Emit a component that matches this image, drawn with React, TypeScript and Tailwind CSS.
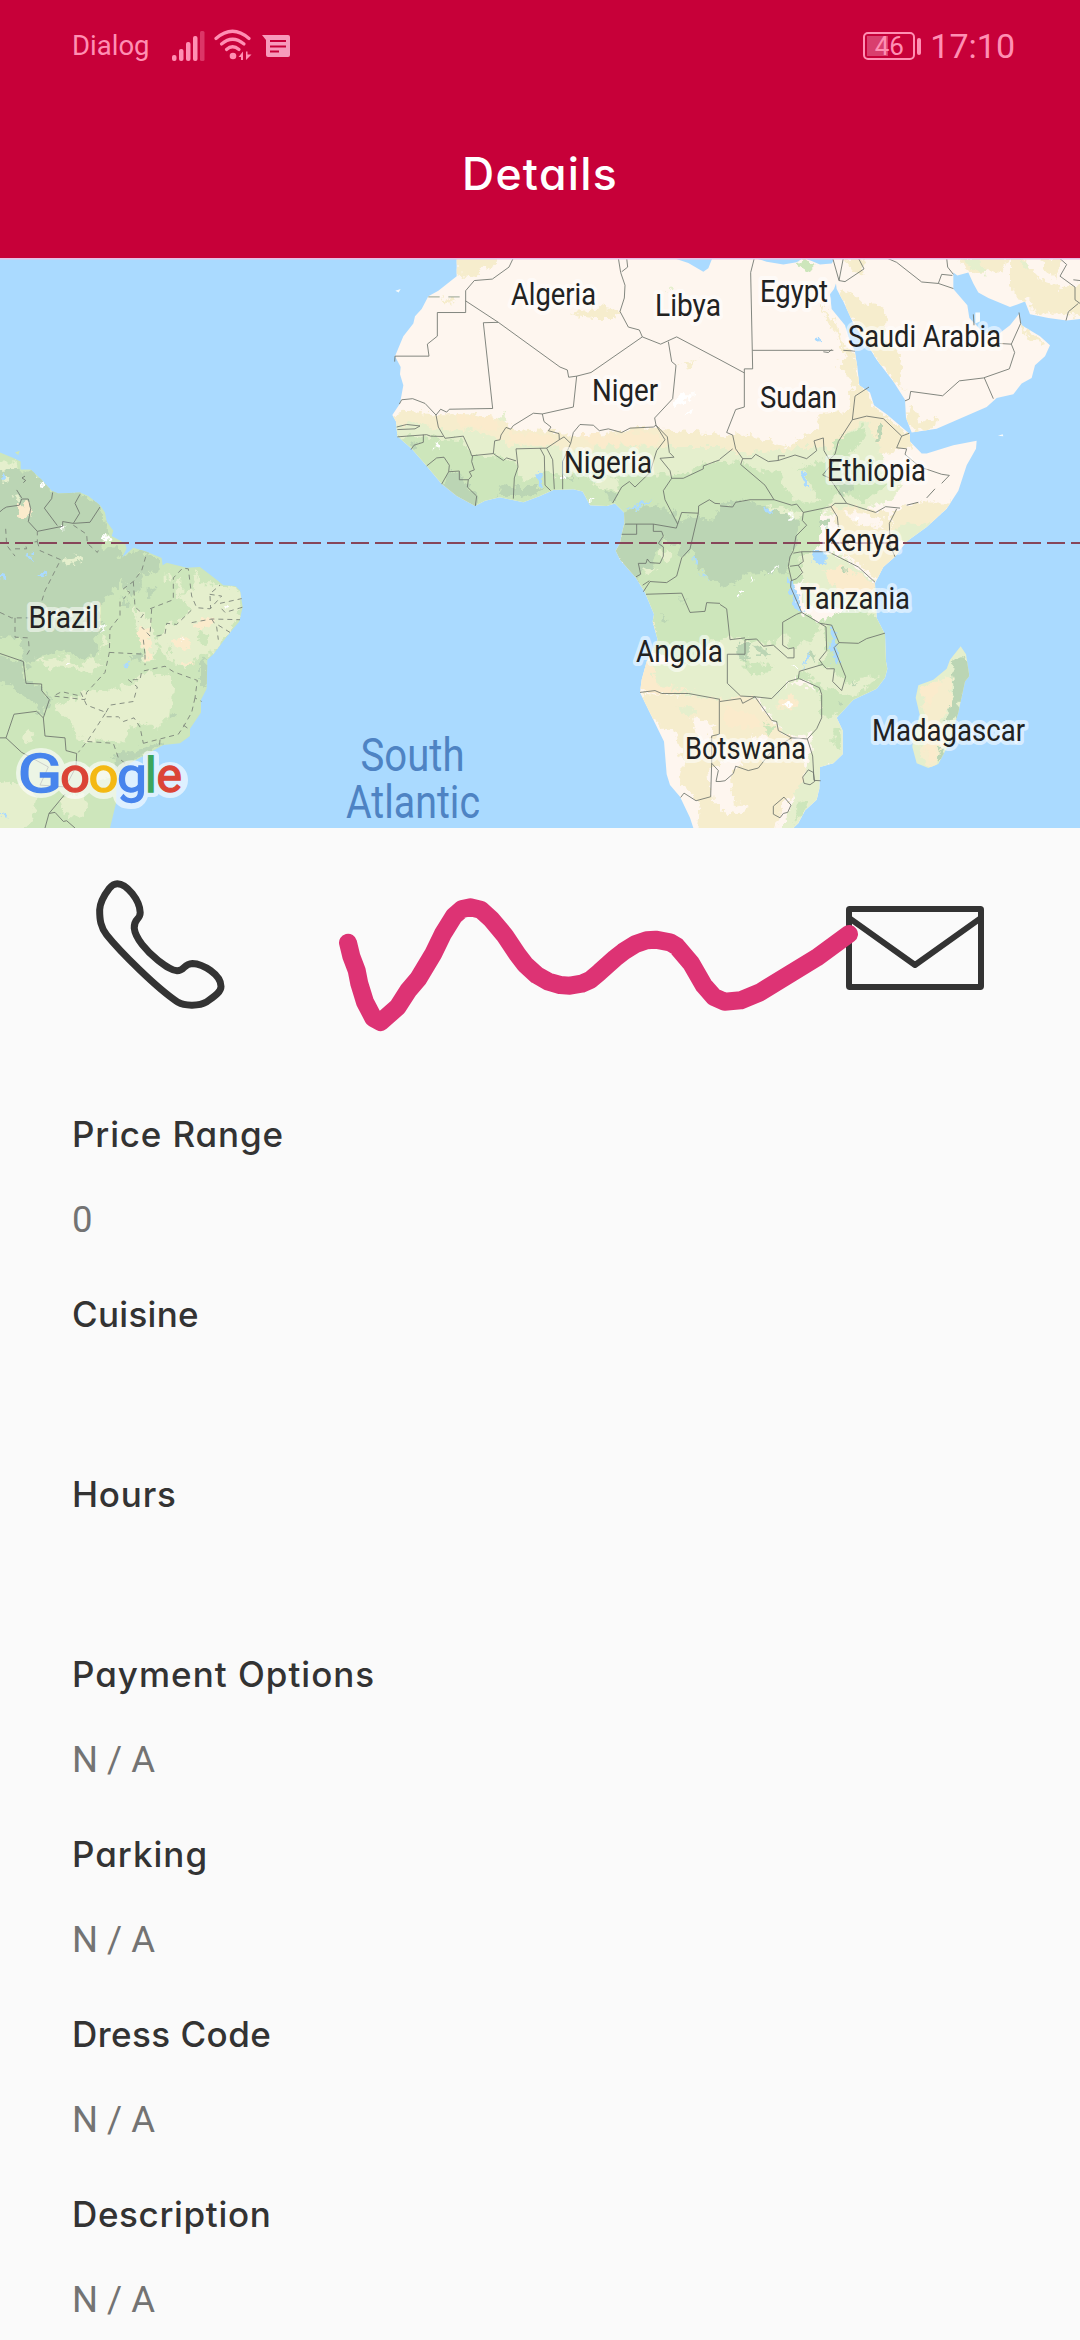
import React from "react";

type Patch = { fill: string; d: string };

const DESERT = "#fef6ef";
const SAND = "#f6edcd";
const PEACH = "#fbebcc";
const LIME = "#e5efcd";
const GREEN = "#cde6bb";
const FOREST = "#bbd5b4";
const WATER = "#aadaff";

const AMERICA_LAND =
  "M0,535 L40,550 62,560 62,582 92,582 125,610 155,640 175,648 240,645 265,655 300,680 315,700 320,725 340,750 335,765 375,785 380,800 365,825 400,797 440,808 485,825 488,845 500,838 560,852 600,850 650,885 670,900 705,902 720,915 728,960 718,1000 690,1030 665,1060 640,1090 622,1105 620,1185 603,1215 603,1250 570,1295 570,1315 540,1335 490,1340 440,1365 390,1390 350,1440 348,1500 330,1568 0,1568Z";

const WEST_AFRICA_LAND =
  "M290,0 L290,50 235,90 205,105 185,140 165,160 160,180 130,215 105,270 122,300 120,320 130,350 120,400 97,432 108,450 112,490 155,525 200,572 245,622 290,655 345,682 375,668 420,658 490,672 540,655 580,638 640,636 668,642 690,680 740,682 765,675 792,700 793,730 785,760 780,785 767,805 780,830 828,880 855,920 882,980 878,1000 893,1050 880,1075 860,1110 845,1160 840,1195 880,1270 912,1330 920,1420 930,1450 960,1482 990,1540 1000,1568 1080,1568 1080,0 1057,0 1045,28 1030,38 985,14 940,0Z";

const EAST_AFRICA_LAND =
  "M0,0 L102,0 140,10 190,18 230,12 250,0 275,8 300,18 335,15 345,0 352,60 342,85 330,100 335,140 375,185 385,215 405,258 412,300 418,350 450,370 462,405 500,430 545,465 570,485 570,505 605,538 620,538 700,515 770,503 768,525 740,570 715,640 680,690 620,740 560,780 525,822 490,850 465,895 470,990 495,1035 498,1110 502,1130 495,1155 470,1185 400,1215 350,1265 368,1300 368,1365 340,1390 300,1400 298,1460 290,1490 255,1520 235,1555 220,1568 0,1568Z";

const ARABIA_LAND =
  "M338,0 L1080,0 1080,168 1040,172 985,165 930,155 915,120 870,135 805,110 775,95 760,70 745,40 712,48 700,40 700,85 742,130 748,165 790,205 835,210 870,185 896,155 905,185 960,215 990,240 975,270 945,295 935,330 905,345 880,375 830,385 800,410 700,450 650,470 575,480 558,440 555,390 520,340 470,280 440,235 400,180 370,120 350,85Z";

const MADAGASCAR_LAND =
  "M722,1068 L738,1090 748,1150 735,1165 715,1250 685,1340 655,1392 625,1403 590,1390 577,1345 580,1310 600,1260 587,1210 595,1175 640,1160 680,1130 690,1105Z";

const AMERICA: Patch[] = [
  { fill: FOREST, d: "M-30,575 L62,582 92,582 155,642 240,645 300,680 318,720 322,750 305,800 355,795 360,820 420,805 480,835 470,862 420,870 430,900 400,935 360,880 350,905 320,930 300,965 305,1020 285,1050 290,1085 250,1108 200,1085 170,1080 110,1100 80,1125 60,1080 -30,1060Z" },
  { fill: GREEN, d: "M-30,1040 L60,1050 75,1100 -30,1088Z" },
  { fill: FOREST, d: "M-30,1088 L70,1110 78,1170 125,1175 148,1215 130,1265 100,1225 60,1200 45,1175 -30,1165Z" },
  { fill: LIME, d: "M-30,560 L45,560 50,580 -30,585Z M10,600 h18 v15 h-18z M180,832 L250,820 248,835 200,845Z M38,645 L60,660 60,678 42,665Z" },
  { fill: PEACH, d: "M50,680 L88,670 90,715 100,718 55,712Z" },
  { fill: LIME, d: "M170,1238 L240,1205 280,1185 330,1190 400,1165 430,1140 500,1145 520,1180 510,1255 470,1300 430,1275 400,1290 370,1330 240,1325 205,1270Z" },
  { fill: LIME, d: "M105,1100 L140,1105 200,1098 240,1125 280,1100 310,1120 270,1140 200,1128 140,1125Z M310,1040 L330,1060 300,1080Z" },
  { fill: LIME, d: "M540,930 L600,900 680,900 722,915 725,960 700,1010 650,1080 600,1090 560,1130 500,1100 470,1060 500,1010 560,985Z" },
  { fill: LIME, d: "M500,860 L520,900 500,890Z M530,880 h14 v50 h-14z M590,860 L605,900 590,930 575,920Z M400,955 L440,990 470,1040 460,1110 430,1110 430,1050 410,1020Z" },
  { fill: GREEN, d: "M540,950 L560,945 570,975 545,970Z M600,1020 L630,1040 620,1070 590,1050Z M500,1060 L515,1070 510,1095Z" },
  { fill: PEACH, d: "M415,1010 L440,1020 450,1070 460,1100 440,1110 430,1060 412,1040Z M575,1010 L640,985 650,1000 600,1020Z M515,1050 L560,1040 570,1080 530,1070Z M550,1110 h30 v12 h-30z" },
  { fill: FOREST, d: "M600,1105 L622,1105 622,1180 600,1170Z M340,1370 L440,1345 490,1330 480,1345 400,1385 350,1420Z M440,860 L460,850 455,870Z M360,940 h25 v20 h-25z M440,905 L470,915 440,935Z M515,1245 L530,1258 512,1270Z M390,1095 h40 v12 h-40z" },
  { fill: LIME, d: "M-30,1450 L60,1440 110,1480 100,1540 60,1598 -30,1598Z M180,1490 L240,1470 270,1500 240,1540 190,1530Z M80,1300 L100,1315 80,1335 65,1320Z M250,1400 L330,1410 340,1430 260,1440Z" },
  { fill: WATER, d: "M70,818 L95,812 100,828Z M0,870 L28,875 0,882Z M110,875 L150,860 130,875Z M370,1120 L385,1112 380,1130Z M0,605 L12,590 15,612Z M0,1530 L25,1525 20,1540Z" },
  { fill: "#ffffff", d: "M120,612 L145,630 125,625Z M315,760 L335,775 318,780Z M185,735 L198,740 188,748Z M300,1015 L312,1018 302,1028Z M195,1110 h14 v8 h-14z M540,1045 L555,1050 548,1062Z M675,950 l10,10 -6,12z" },
];

const WEST_AFRICA: Patch[] = [
  { fill: SAND, d: "M290,-30 L450,-30 400,20 330,50 290,45Z M630,150 L680,145 720,135 780,145 770,165 700,165 650,160Z M250,110 L285,120 260,128Z M960,290 L1000,285 1020,265 990,300Z" },
  { fill: SAND, d: "M60,432 L150,420 240,430 340,430 400,440 470,470 600,480 640,490 700,485 880,465 930,475 1110,485 1110,560 900,540 640,540 400,530 250,500 60,470Z" },
  { fill: LIME, d: "M60,470 L180,450 230,470 330,475 400,495 450,515 560,515 640,530 760,515 900,520 1110,520 1110,640 60,640Z" },
  { fill: PEACH, d: "M290,430 L400,440 420,470 300,465Z M660,490 L700,485 870,480 905,500 870,515 700,515Z M450,480 L560,490 600,500 560,510 450,505Z" },
  { fill: GREEN, d: "M60,490 L180,490 250,500 310,500 335,545 400,545 470,560 480,590 560,590 590,600 640,590 770,600 860,590 930,600 1060,562 1110,562 1110,1050 1040,1080 1000,1125 900,1090 870,1080 860,950 740,780 680,700 345,720 150,600Z" },
  { fill: LIME, d: "M470,530 L540,530 540,600 490,610 470,580Z M560,530 L610,530 610,570 580,590Z M690,610 L760,600 780,640 710,630Z M620,560 L680,555 690,590 640,585Z M370,500 L440,520 430,540 350,535Z" },
  { fill: FOREST, d: "M230,630 L270,590 300,585 310,612 350,655 345,700 290,675Z M430,625 L470,630 530,630 560,635 490,655 410,655Z M150,510 L190,505 160,525Z M610,600 L650,600 640,615Z M730,640 L770,650 760,675Z" },
  { fill: FOREST, d: "M790,700 L860,680 940,695 955,730 1010,705 1050,705 1110,685 1110,905 1050,880 1010,850 1000,800 960,830 940,800 890,850 850,850 830,890 750,805 785,760Z" },
  { fill: GREEN, d: "M1015,680 L1050,665 1075,690 1060,720 1020,715Z M910,770 L960,800 940,850 900,880 870,870Z" },
  { fill: LIME, d: "M900,800 L940,810 920,840 905,830Z M840,855 L890,850 870,870Z" },
  { fill: FOREST, d: "M900,970 L920,1000 905,1005Z M955,940 L990,935 970,945Z" },
  { fill: LIME, d: "M850,1110 L960,1120 1020,1100 1040,1060 1110,1050 1110,1215 900,1198 825,1160Z" },
  { fill: PEACH, d: "M850,1110 L880,1130 890,1175 1000,1190 900,1198 830,1190Z M870,985 L890,1040 870,1000Z" },
  { fill: SAND, d: "M820,1197 L1110,1212 1110,1598 1000,1598 1020,1500 960,1440 970,1380 940,1300 890,1280Z" },
  { fill: DESERT, d: "M1000,1265 L1050,1275 1060,1300 1040,1340 1010,1320Z M1045,1400 L1110,1400 1110,1520 1060,1500Z" },
  { fill: LIME, d: "M950,1235 L990,1228 1010,1250 975,1258Z M930,80 L945,85 925,100Z M410,445 L440,420 430,455Z" },
  { fill: "#ffffff", d: "M935,405 L955,375 1005,375 980,395 940,408Z M970,430 L1000,415 990,432Z M220,510 L240,505 238,525 225,520Z M690,662 h15 v8 h-15z M600,600 h12 v8 h-12z" },
  { fill: WATER, d: "M525,590 L548,588 545,630 535,625Z M800,692 L880,658 875,670 810,695Z M1000,825 L1015,830 1005,845Z M1010,862 L1055,882 1030,875Z" },
];

const EAST_AFRICA: Patch[] = [
  { fill: GREEN, d: "M225,15 L260,5 285,15 262,38Z" },
  { fill: SAND, d: "M300,120 L350,180 370,240 400,260 415,340 450,370 460,410 570,485 575,520 480,540 300,540 -30,560 -30,485 100,490 200,520 290,470 300,430 390,420 400,350 350,290 380,270 340,200Z" },
  { fill: LIME, d: "M-30,520 L90,540 230,520 340,520 390,470 440,450 480,520 490,600 560,620 520,670 420,690 340,700 200,700 -30,640Z" },
  { fill: GREEN, d: "M-30,562 L60,560 140,590 240,580 330,550 350,500 430,460 440,490 380,550 460,600 500,620 440,670 350,640 330,680 300,700 300,790 240,890 200,900 -30,930Z" },
  { fill: LIME, d: "M180,570 L250,590 280,640 300,670 230,670 190,630Z M140,680 L250,700 230,730 150,700Z" },
  { fill: FOREST, d: "M-30,690 L60,665 150,690 235,720 225,790 200,860 80,870 20,910 -30,900Z M340,620 L410,600 400,640 360,650Z M300,720 h30 v20 h-30z" },
  { fill: SAND, d: "M330,680 L440,690 510,700 510,760 545,822 500,850 475,895 430,850 360,810 350,730Z M520,690 L620,670 700,670 630,750 560,790 510,750Z" },
  { fill: DESERT, d: "M370,695 L440,705 490,720 480,745 400,730Z M540,620 L640,600 680,640 600,670 520,670Z" },
  { fill: LIME, d: "M510,750 L560,730 640,735 560,790Z M240,810 L360,815 460,890 480,990 360,960 250,960Z" },
  { fill: PEACH, d: "M310,860 L370,850 420,870 470,900 430,930 350,920Z M250,900 h50 v20 h-50z" },
  { fill: GREEN, d: "M-30,905 L20,910 110,880 205,890 240,970 300,1000 400,960 490,990 515,1035 522,1130 480,1200 350,1275 300,1260 300,1190 240,1160 190,1110 100,1110 -30,1060Z" },
  { fill: LIME, d: "M-30,1050 L60,1045 160,1065 230,1000 310,1010 320,1090 290,1120 340,1130 375,1165 480,1150 400,1210 310,1180 240,1150 150,1210 20,1215 -30,1215Z" },
  { fill: GREEN, d: "M60,1110 L160,1120 130,1150 90,1140Z M240,1130 L290,1160 240,1160Z M190,1000 L220,990 300,1010 280,1050 210,1070Z" },
  { fill: FOREST, d: "M50,1060 L90,1055 80,1120 55,1100Z M270,1090 L290,1080 280,1110Z M355,1220 L372,1222 365,1238Z M100,1070 L160,1085 130,1100Z" },
  { fill: SAND, d: "M-30,1215 L100,1205 155,1275 210,1320 250,1330 255,1460 190,1500 160,1598 -30,1598Z" },
  { fill: LIME, d: "M120,1215 L220,1170 300,1190 305,1270 260,1320 200,1310 160,1270Z M280,1270 L350,1255 388,1300 385,1380 310,1410 308,1470 250,1540 220,1598 160,1598 200,1540 250,1430 270,1370Z" },
  { fill: PEACH, d: "M170,1210 L230,1205 230,1235 180,1240Z M10,1240 L110,1250 120,1290 20,1290Z" },
  { fill: GREEN, d: "M340,1290 L362,1300 362,1350 340,1340Z M240,1490 L270,1490 220,1560Z M130,1280 L160,1290 150,1310Z" },
  { fill: DESERT, d: "M-30,1400 L30,1375 80,1370 30,1430 40,1500 90,1510 60,1530 -30,1520Z M90,1320 L150,1310 130,1350Z" },
  { fill: FOREST, d: "M440,560 L460,555 450,620 430,610Z M465,470 L490,450 485,500 470,500Z M370,850 h10 v12 h-10z M390,1160 L410,1165 395,1180Z" },
  { fill: WATER, d: "M240,588 L255,600 270,640 250,620Z M120,692 L150,688 170,696 140,700Z M278,810 L320,805 320,840 300,848 278,830Z M204,870 L215,880 245,970 232,975 210,920Z M332,1010 L345,1030 358,1110 345,1120 332,1070Z M240,1130 L275,1080 265,1110Z M165,1200 L195,1185 170,1198Z M293,215 L307,228 294,230Z" },
  { fill: "#ffffff", d: "M85,885 L95,870 90,900Z M150,860 L175,852 165,862Z M205,700 h10 v20 h-10z M60,915 h12 v10 h-12z M400,715 L415,720 408,735Z M215,1120 h12 v8 h-12z M190,1225 h18 v8 h-18z" },
];

const ARABIA: Patch[] = [
  { fill: SAND, d: "M350,85 L400,100 430,125 480,130 500,150 490,220 530,250 550,300 540,350 570,370 520,340 440,235 400,180Z M380,0 L430,0 430,50 400,40Z" },
  { fill: SAND, d: "M720,0 L860,0 850,40 800,30 770,50 740,30Z M870,-30 L920,10 960,60 1020,80 1110,70 1110,165 1000,150 950,155 930,120 890,110 870,70Z M895,180 L975,235 930,230Z M570,400 L600,450 650,440 640,470 580,480 560,440Z M960,0 L1020,0 1010,60 980,40Z" },
  { fill: LIME, d: "M730,0 L790,0 780,20 800,45 760,30Z M900,10 L930,15 925,30Z" },
];

const AMERICA_BORDERS =
  "M0,698 L10,690 20,685 58,680 65,663 85,663 92,690 85,725 112,752 188,738 188,725 220,730 270,727 300,685 M50,638 L65,660 M158,645 L155,662 133,688 172,736 M240,650 L225,675 239,702 220,730 M75,600 L66,605 77,612 70,618 M0,1088 L70,1110 78,1170 125,1172 125,1190 148,1215 130,1265 110,1247 42,1255 18,1320 0,1320 M18,1320 L65,1360 145,1400 120,1450 195,1455 M130,1265 L135,1315 195,1320 198,1355 230,1363 228,1400 205,1440 M195,1475 L147,1528 135,1568 M147,1528 L165,1525 190,1550 200,1548 225,1568";

const AMERICA_STATES =
  "M17,745 L20,790 45,820 M45,800 L80,800 75,785 112,780 112,752 M112,780 L120,805 182,830 135,915 125,945 M0,975 L35,990 85,990 M45,990 L45,1043 85,1045 88,1080 75,1100 M220,735 L260,760 262,785 292,810 300,795 M437,822 L425,860 400,890 370,910 390,920 370,938 M400,890 L405,960 430,980 415,1000 M360,945 L360,985 330,1020 328,1085 315,1140 260,1195 255,1215 160,1205 185,1193 242,1205 M328,1085 L435,1090 435,1120 M450,965 L520,940 520,880 548,853 565,855 575,930 590,962 630,965 665,930 628,925 660,900 M455,965 L450,1040 425,1015 M430,1050 L435,1090 M470,1040 L495,1035 500,1005 530,1008 575,968 M575,1003 L635,993 720,995 M635,993 L650,1015 655,1050 M655,1010 L690,1030 M665,965 L675,975 730,960 M660,950 L725,937 M630,930 L632,965 M242,1195 L260,1230 318,1250 265,1325 235,1360 M318,1250 L330,1230 400,1220 412,1180 385,1160 420,1160 425,1137 495,1123 520,1138 592,1162 585,1210 605,1220 M585,1210 L575,1250 550,1290 535,1310 430,1335 M320,1262 L355,1262 370,1275 402,1265 420,1290 430,1335 M262,1330 L340,1335 355,1375 395,1405 M480,1325 L478,1345 M550,1285 L570,1298";

const WEST_BORDERS =
  "M460,0 L447,25 397,58 343,62 317,90 317,150 232,150 232,215 202,237 207,270 105,270 104,285 M317,118 L415,177 600,300 622,308 626,328 650,325 693,315 847,217 838,198 805,190 780,147 793,110 795,75 782,40 775,0 M800,0 L803,25 785,38 M415,177 L370,178 398,414 268,416 260,424 242,416 228,432 195,400 158,387 125,390 118,402 M650,325 L640,410 547,429 520,427 460,461 452,471 438,466 423,487 420,500 404,503 400,538 335,544 330,530 310,490 255,496 235,465 228,432 M110,465 L140,458 180,462 165,470 112,472 M112,492 L200,486 212,490 250,491 M190,486 L190,507 162,515 153,527 M200,572 L230,550 252,548 268,570 266,588 245,622 M266,588 L298,586 298,610 325,610 335,600 328,588 343,583 335,560 338,544 M325,610 L322,630 350,655 346,682 M400,538 L430,557 440,550 468,558 M547,429 L552,450 573,465 565,475 597,483 598,500 560,523 468,525 474,575 463,605 460,662 M540,523 L553,545 555,625 572,640 M560,523 L578,555 583,636 M598,500 L612,492 632,510 608,560 608,636 M632,510 L640,480 660,458 700,460 718,475 745,470 785,480 810,468 880,465 888,460 M888,460 L884,440 938,387 948,295 935,285 925,230 M847,217 L902,237 950,217 1080,280 M888,460 L915,500 890,530 870,590 825,630 808,615 785,630 758,674 M888,460 L922,492 928,535 942,548 900,551 930,585 935,606 970,606 1030,580 1030,572 1080,555 M935,606 L910,640 915,665 953,732 949,743 880,732 795,732 M953,732 L965,700 1015,702 1016,682 1048,665 1065,675 1080,676 M1015,702 L990,800 965,825 950,875 920,893 870,890 850,918 M785,760 L830,760 830,732 M880,732 L880,752 905,752 910,765 895,785 910,795 910,820 900,840 870,838 862,828 858,840 835,840 842,870 828,877 M848,900 L868,888 M858,925 L965,922 990,975 1035,972 1040,948 1080,950 M840,1195 L885,1190 905,1198 985,1198 1080,1214 M1078,1215 L1078,1310 1055,1315 1055,1390 1052,1482 1008,1493 972,1472 962,1484 M1055,1390 L1075,1410 1068,1440 1080,1440";

const EAST_BORDERS =
  "M103,0 L92,40 98,305 73,305 73,410 47,417 20,480 38,487 47,525 68,552 95,552 107,540 145,560 175,557 225,542 260,552 290,530 282,503 310,495 312,530 328,555 345,540 355,505 397,445 405,380 447,355 M98,254 L340,254 M370,254 L405,256 M0,280 L73,316 M175,557 L175,544 195,544 M310,258 L325,260 335,252 M0,553 L38,525 M68,552 L62,568 135,625 162,665 215,680 230,677 250,700 333,684 345,675 380,675 328,605 308,597 345,555 M0,682 L38,685 47,672 90,665 162,665 M250,700 L247,722 260,735 228,765 220,805 210,822 205,848 215,888 M380,675 L467,700 497,684 540,688 M397,445 L440,435 490,442 545,490 568,482 M545,490 L530,522 560,525 555,540 600,575 665,595 688,598 665,620 M333,684 L352,712 355,740 M530,690 L508,730 510,790 525,822 M220,812 L245,808 325,808 415,850 465,892 M245,808 L250,835 235,845 210,848 M235,845 L248,865 230,882 213,888 212,905 245,975 230,980 188,1002 188,1065 205,1075 222,1072 222,1100 203,1100 160,1065 130,1068 110,1048 75,1050 75,1090 22,1090 22,1170 62,1205 105,1207 M155,1212 L105,1207 M155,1212 L205,1165 235,1157 238,1137 308,1118 298,1105 320,1080 318,1015 300,1005 245,975 M0,953 L20,965 30,1050 75,1045 M300,1005 L335,1010 357,1058 415,1060 440,1047 495,1032 M357,1058 L342,1072 377,1152 365,1190 338,1165 343,1130 320,1130 308,1118 M238,1157 L298,1182 305,1200 305,1265 290,1295 262,1323 215,1320 175,1300 170,1275 155,1272 105,1207 M0,1220 L62,1212 68,1225 105,1207 M262,1323 L278,1370 282,1437 302,1438 M0,1440 L15,1438 40,1418 47,1398 85,1410 115,1403 160,1350 215,1320 M265,1408 L280,1415 284,1440 270,1449 252,1445 248,1428Z M192,1483 L213,1505 203,1525 190,1528 180,1540 160,1530 160,1508Z";

const ARABIA_BORDERS =
  "M338,0 L357,62 375,65 432,30 415,0 M370,0 L357,62 M500,0 L530,12 605,66 655,70 665,45 697,48 M655,70 L700,84 M680,0 L683,25 700,45 M555,393 L568,388 572,367 668,379 718,338 790,330 868,305 884,260 874,237 835,235 M874,237 L902,180 897,150 M793,330 L820,387 M760,155 L762,185 M1018,0 L1040,18 1020,50 1065,80 1065,115 1080,125 M1060,60 L1080,62 M1075,125 L1045,148 1038,172";

const LABELS = [
  { text: "Algeria", x: 511, y: 47, w: 85 },
  { text: "Libya", x: 655, y: 57.5, w: 66 },
  { text: "Egypt", x: 760, y: 44, w: 68 },
  { text: "Saudi Arabia", x: 848, y: 89, w: 153 },
  { text: "Niger", x: 592, y: 142.5, w: 66 },
  { text: "Sudan", x: 760, y: 150, w: 77 },
  { text: "Nigeria", x: 564, y: 214.5, w: 88 },
  { text: "Ethiopia", x: 827, y: 222.5, w: 99 },
  { text: "Kenya", x: 824, y: 292.5, w: 76 },
  { text: "Tanzania", x: 800, y: 351, w: 110 },
  { text: "Angola", x: 636, y: 404, w: 87 },
  { text: "Botswana", x: 685, y: 501, w: 121 },
  { text: "Madagascar", x: 872, y: 483, w: 153 },
  { text: "Brazil", x: 28.5, y: 370, w: 70.5 },
];

function Region({
  id,
  x,
  land,
  base,
  patches,
  borders,
}: {
  id: string;
  x: number;
  land: string;
  base: string;
  patches: Patch[];
  borders?: string;
}) {
  return (
    <g transform={`translate(${x} 0)`}>
      <clipPath id={id}>
        <path d={land} />
      </clipPath>
      <path d={land} fill={base} />
      <g clipPath={`url(#${id})`}>
        <g filter="url(#rough)">
          {patches.map((p, i) => (
            <path key={i} d={p.d} fill={p.fill} />
          ))}
        </g>
      </g>
      {borders && (
        <path d={borders} fill="none" stroke="#6d736b" strokeWidth="0.85" vectorEffect="non-scaling-stroke" />
      )}
    </g>
  );
}

function WorldMap() {
  return (
    <div className="relative h-[570px] w-full shrink-0 overflow-hidden bg-[#aadaff]">
      <svg className="block h-full w-full" viewBox="0 0 3240 1568" preserveAspectRatio="none">
        <filter id="rough" x="-5%" y="-5%" width="110%" height="110%">
          <feTurbulence type="fractalNoise" baseFrequency="0.05" numOctaves="3" seed="4" result="n" />
          <feDisplacementMap in="SourceGraphic" in2="n" scale="36" xChannelSelector="R" yChannelSelector="G" />
        </filter>
        <Region id="land-america" x={0} land={AMERICA_LAND} base={GREEN} patches={AMERICA} borders={AMERICA_BORDERS} />
        <path d={AMERICA_STATES} fill="none" stroke="#7d857b" strokeWidth="0.9" strokeDasharray="5 4" vectorEffect="non-scaling-stroke" />
        <Region id="land-west" x={1080} land={WEST_AFRICA_LAND} base={DESERT} patches={WEST_AFRICA} borders={WEST_BORDERS} />
        <Region id="land-east" x={2160} land={EAST_AFRICA_LAND} base={DESERT} patches={EAST_AFRICA} borders={EAST_BORDERS} />
        <Region id="land-arabia" x={2160} land={ARABIA_LAND} base={DESERT} patches={ARABIA} borders={ARABIA_BORDERS} />
        <Region
          id="land-madagascar"
          x={2160}
          land={MADAGASCAR_LAND}
          base={LIME}
          patches={[
            { fill: SAND, d: "M640,1170 L700,1150 690,1230 650,1300 670,1340 640,1410 600,1370 610,1300 610,1220Z" },
            { fill: PEACH, d: "M600,1180 L660,1160 650,1210 610,1230Z M610,1330 L650,1340 640,1390Z" },
            { fill: FOREST, d: "M715,1095 L760,1120 768,1150 730,1190 715,1250 690,1280 680,1260 705,1180 695,1120Z M660,1350 L680,1345 655,1390Z" },
          ]}
        />
        <path d="M1285,107 h34 M1345,107 h34" stroke="#8c9a88" strokeWidth="0.9" fill="none" vectorEffect="non-scaling-stroke" />
        <path d="M2720,680 l35,-8 M2780,660 l25,-25" stroke="#6d736b" strokeWidth="0.9" fill="none" vectorEffect="non-scaling-stroke" />
        <path d="M1186,90 l16,-5 -6,10z M2994,489 l14,-4 2,5z M2926,150 l14,0 0,25 -14,5z" fill="#f7fbfb" />
        <path d="M45,535 l14,-5 -4,12z" fill={GREEN} />
        <path d="M0,2 H3240" stroke="#e7bfe6" strokeWidth="1.5" vectorEffect="non-scaling-stroke" />
        <path d="M-27,784 H3240" stroke="#87465a" strokeWidth="2" strokeDasharray="18 6" vectorEffect="non-scaling-stroke" />
      </svg>
      <svg className="absolute inset-0 h-full w-full" viewBox="0 0 1080 570">
        <g fontFamily="Roboto, sans-serif" fontSize="30.5" fill="#222222" stroke="#ffffff" strokeOpacity="0.55" strokeWidth="8" strokeLinejoin="round" style={{ paintOrder: "stroke" }}>
          {LABELS.map((l) => (
            <text key={l.text} x={l.x} y={l.y} textLength={l.w} lengthAdjust="spacingAndGlyphs">
              {l.text}
            </text>
          ))}
        </g>
        <g fontFamily="Roboto, sans-serif" fontSize="45.5" fill="#4e83c3">
          <text x="360.500" y="512.5" textLength="104" lengthAdjust="spacingAndGlyphs">South</text>
          <text x="346" y="560" textLength="134" lengthAdjust="spacingAndGlyphs">Atlantic</text>
        </g>
        <g opacity="0.62" fill="#ffffff" stroke="#ffffff" strokeWidth="10" strokeLinejoin="round">
          <circle cx="41" cy="515" r="20" />
          <circle cx="75" cy="522" r="14" />
          <circle cx="103.500" cy="522" r="14" />
          <path d="M118,522 a14,14 0 0 1 26,-8 v16 q0,16 -13,16 q-11,0 -13,-8 q6,-4 0,-16z" />
          <path d="M148,498 h6 v36 h-6z" />
          <circle cx="170" cy="522" r="13" />
        </g>
        <text y="534" fontFamily="Roboto, sans-serif" fontSize="48" strokeWidth="1.300">
          <tspan x="17.500" fontSize="53" textLength="45" lengthAdjust="spacingAndGlyphs" fill="#4885ed" stroke="#4885ed">G</tspan>
          <tspan x="60" textLength="30" lengthAdjust="spacingAndGlyphs" fill="#db4437" stroke="#db4437">o</tspan>
          <tspan x="88.500" textLength="30" lengthAdjust="spacingAndGlyphs" fill="#f4b913" stroke="#f4b913">o</tspan>
          <tspan x="117" textLength="30" lengthAdjust="spacingAndGlyphs" fill="#4885ed" stroke="#4885ed">g</tspan>
          <tspan x="145" fill="#3ba55c" stroke="#3ba55c">l</tspan>
          <tspan x="156.500" fill="#db4437" stroke="#db4437">e</tspan>
        </text>
      </svg>
    </div>
  );
}

function SignalIcon() {
  return (
    <svg className="h-8 w-[34px]" viewBox="0 0 34 32" fill="#ff8fb3">
      <rect x="0" y="25" width="4.500" height="6" rx="2" />
      <rect x="7" y="19" width="4.500" height="12" rx="2" />
      <rect x="14" y="12" width="4.500" height="19" rx="2" />
      <rect x="21" y="6" width="4.500" height="25" rx="2" />
      <rect x="28" y="1" width="4.500" height="30" rx="1.500" opacity="0.38" />
    </svg>
  );
}

function WifiIcon() {
  return (
    <svg className="h-8 w-[38px]" viewBox="0 0 38 32" fill="none" stroke="#ff8fb3" strokeWidth="3.200" strokeLinecap="round">
      <path d="M2,9.500 Q18.500,-5 35,9.500" />
      <path d="M7.500,15 Q18.500,5.500 30,15" />
      <path d="M12.500,20.500 Q18.500,15 25,20.500" />
      <circle cx="19" cy="27" r="3.300" fill="#ff8fb3" stroke="none" />
      <path d="M24.500,28 L29,22.500 V31 H27 V28Z M32,22.500 V31 L37.500,25.500 H33.500 V22.500Z" fill="#ff8fb3" stroke="none" />
    </svg>
  );
}

function MessageIcon() {
  return (
    <svg className="h-6 w-7" viewBox="0 0 28 24">
      <path d="M0,1 H26 a2,2 0 0 1 2,2 V21 a2,2 0 0 1 -2,2 H6 a2,2 0 0 1 -2,-2 V6Z" fill="#f79abb" />
      <path d="M8,7 H24 M8,12.500 H24 M8,17.500 H17" stroke="#c70039" strokeWidth="2" />
    </svg>
  );
}

function StatusBar() {
  return (
    <div className="flex h-[92px] items-center justify-between pl-[72px] pr-[65px] font-[Roboto,sans-serif] text-[#ff8fb3]">
      <div className="flex items-center">
        <span className="w-[100px] text-[27.500px] leading-none">Dialog</span>
        <SignalIcon />
        <div className="ml-2 mt-[-3px]">
          <WifiIcon />
        </div>
        <div className="ml-[10px]">
          <MessageIcon />
        </div>
      </div>
      <div className="flex items-center">
        <div className="flex h-7 w-[52px] items-center rounded-[5px] border-2 border-[#ff8fb3] p-[2px]">
          <div className="relative flex h-full w-full items-center justify-center">
            <div className="absolute left-0 h-full w-[46%] bg-[#d93f6e]" />
            <span className="relative text-[26px] leading-none">46</span>
          </div>
        </div>
        <div className="ml-[2px] h-[17px] w-[4px] rounded-sm bg-[#ff8fb3]" />
        <span className="ml-[9px] text-[34px] leading-none">17:10</span>
      </div>
    </div>
  );
}

function PhoneIcon() {
  return (
    <svg className="h-[129px] w-[129px]" viewBox="108 90 388 388" fill="none" stroke="#333333" strokeWidth="21" strokeLinejoin="round">
      <path d="M172,101 C200,101 240,150 241,188 C241,212 222,203 223,235 C226,265 260,305 295,332 C320,351 335,362 352,363 C376,363 370,342 398,341 C430,342 484,375 484,410 C484,430 455,445 440,457 C420,469 375,470 355,458 C290,415 180,305 140,255 C122,232 119,210 119,180 C120,155 135,132 148,115 C156,105 162,101 172,101Z" />
    </svg>
  );
}

function MailIcon() {
  return (
    <svg className="h-[84px] w-[138px]" viewBox="918 168 414 252" fill="none" stroke="#333333" strokeWidth="18" strokeLinejoin="round">
      <rect x="927" y="177" width="396" height="234" rx="2" />
      <path d="M930,206 L1125,345 1320,206" />
    </svg>
  );
}

function Scribble() {
  return (
    <svg className="absolute left-[330px] top-[69px] h-[140px] w-[540px]" viewBox="810 140 1620 420" fill="none" stroke="#dd3374" strokeWidth="54" strokeLinecap="round" strokeLinejoin="round">
      <polyline points="864,277 874,318 890,360 898,400 915,455 940,503 962,515 1013,470 1045,420 1075,385 1120,310 1148,252 1182,197 1206,176 1231,171 1262,178 1295,208 1335,256 1372,312 1395,342 1430,374 1465,394 1500,404 1530,406 1565,400 1592,388 1618,366 1665,324 1690,304 1725,282 1760,270 1787,268 1830,276 1850,288 1894,340 1932,406 1962,440 1994,454 2042,450 2100,426 2270,322 2367,251" />
    </svg>
  );
}

const DETAILS = [
  { title: "Price Range", value: "0", tracking: "tracking-[0.85px]" },
  { title: "Cuisine", value: "", tracking: "tracking-[0.3px]" },
  { title: "Hours", value: "", tracking: "tracking-[0.8px]" },
  { title: "Payment Options", value: "N / A", tracking: "tracking-[1px]" },
  { title: "Parking", value: "N / A", tracking: "tracking-[1px]" },
  { title: "Dress Code", value: "N / A", tracking: "tracking-[0.45px]" },
  { title: "Description", value: "N / A", tracking: "tracking-[0.65px]" },
];

export default function App() {
  return (
    <div className="flex h-[2340px] w-[1080px] flex-col overflow-hidden bg-[#fafafa]">
      <header className="h-[258px] shrink-0 bg-[#c70039]">
        <StatusBar />
        <h1 className="mt-[54px] text-center font-[Inter,sans-serif] text-[44.500px] font-medium leading-[56px] tracking-[1.3px] text-white [font-feature-settings:'cv11']">
          Details
        </h1>
      </header>
      <WorldMap />
      <div className="relative flex h-[273px] shrink-0 items-start justify-between pl-24 pr-24">
        <div className="pt-[52px]">
          <PhoneIcon />
        </div>
        <div className="pt-[78px]">
          <MailIcon />
        </div>
        <Scribble />
      </div>
      <main className="flex flex-col pl-[72px]">
        {DETAILS.map((d) => (
          <section key={d.title} className="h-[180px] shrink-0">
            <h2
              className={`pt-[11px] font-[Inter,sans-serif] text-[35px] font-medium leading-[44px] text-[#333333] [font-feature-settings:'cv11'] ${d.tracking}`}
            >
              {d.title}
            </h2>
            <p className="mt-[42px] font-[Roboto,sans-serif] text-[36.500px] leading-[44px] text-[#737373]">{d.value}</p>
          </section>
        ))}
      </main>
    </div>
  );
}
